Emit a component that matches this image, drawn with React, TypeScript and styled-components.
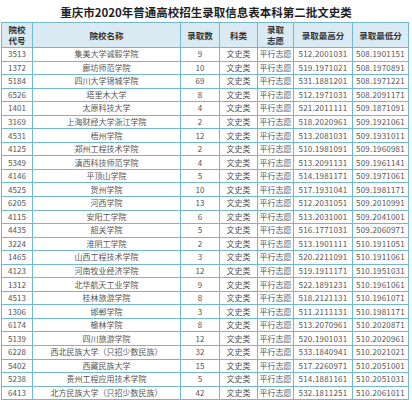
import React from "react";
import styled, { createGlobalStyle } from "styled-components";

const Global = createGlobalStyle`
  html, body { margin: 0; padding: 0; background: #ffffff; }
  body { font-family: "Noto Sans CJK SC", "Noto Sans", sans-serif; }
`;

const Page = styled.div`
  width: 412px;
  height: 400px;
  overflow: hidden;
  background: #ffffff;
`;

const Title = styled.h1`
  margin: 0;
  height: 22px;
  box-sizing: border-box;
  padding-bottom: 3px;
  display: flex;
  align-items: flex-end;
  justify-content: center;
  font-family: "Noto Sans CJK SC", sans-serif;
  font-size: 11.5px;
  line-height: 13px;
  font-weight: 700;
  color: #1f1f1f;
`;

const Grid = styled.div`
  margin-left: 1px;
  width: 408px;
  box-sizing: border-box;
  display: grid;
  grid-template-columns: 30px 147px 38px 37px 35px 58px 55px;
  grid-template-rows: 24px;
  grid-auto-rows: 12.55px;
  gap: 1px;
  padding: 1px;
  background: #72b9d0;
`;

const HeadCell = styled.div`
  background: #d9eaf3;
  display: flex;
  flex-direction: column;
  align-items: center;
  justify-content: center;
  font-size: 8.5px;
  line-height: 11px;
  font-weight: 700;
  color: #333333;
  text-align: center;
`;

const Cell = styled.div<{ $wide?: boolean }>`
  background: #ffffff;
  display: flex;
  align-items: center;
  justify-content: center;
  font-size: 8px;
  line-height: 10px;
  color: #555555;
  white-space: nowrap;
  overflow: hidden;
  letter-spacing: ${(p) => (p.$wide ? "0.2px" : "0")};
`;

type Row = [string, string, string, string, string];

const rows: Row[] = [
  ["3513", "集美大学诚毅学院", "9", "512.2001031", "508.1901151"],
  ["1372", "廊坊师范学院", "10", "519.1971021", "508.1970891"],
  ["5184", "四川大学锦城学院", "69", "531.1881201", "508.1971221"],
  ["6526", "塔里木大学", "8", "512.1971031", "508.2091171"],
  ["1401", "太原科技大学", "4", "521.2011111", "509.1871091"],
  ["3169", "上海财经大学浙江学院", "2", "518.2020961", "509.1921061"],
  ["4531", "梧州学院", "12", "513.2081031", "509.1931011"],
  ["4125", "郑州工程技术学院", "2", "510.1981091", "509.1960981"],
  ["5349", "滇西科技师范学院", "4", "513.2091131", "509.1961141"],
  ["4146", "平顶山学院", "5", "514.1981171", "509.1971061"],
  ["4525", "贺州学院", "10", "517.1931041", "509.1981171"],
  ["6205", "河西学院", "13", "512.2031051", "509.2010991"],
  ["4115", "安阳工学院", "6", "513.2031001", "509.2041001"],
  ["4435", "韶关学院", "5", "516.1771031", "509.2060971"],
  ["3224", "淮阴工学院", "2", "513.1901111", "510.1911051"],
  ["1465", "山西工程技术学院", "3", "520.2211091", "510.1911061"],
  ["4123", "河南牧业经济学院", "12", "519.1911171", "510.1951031"],
  ["1312", "北华航天工业学院", "9", "522.1891231", "510.1961061"],
  ["4513", "桂林旅游学院", "8", "518.2121131", "510.1961071"],
  ["1306", "邯郸学院", "3", "511.2111131", "510.1981171"],
  ["6174", "榆林学院", "8", "513.2070961", "510.2020871"],
  ["5139", "四川旅游学院", "12", "520.1901031", "510.2020961"],
  ["6228", "西北民族大学（只招少数民族）", "32", "533.1840941", "510.2021021"],
  ["5402", "西藏民族大学", "15", "517.2260971", "510.2051001"],
  ["5238", "贵州工程应用技术学院", "5", "514.1881161", "510.2051031"],
  ["6413", "北方民族大学（只招少数民族）", "42", "532.1811251", "510.2061011"],
];

export default function App() {
  return (
    <Page>
      <Global />
      <Title>重庆市2020年普通高校招生录取信息表本科第二批文史类</Title>
      <Grid>
        <HeadCell>
          <span>院校</span>
          <span>代号</span>
        </HeadCell>
        <HeadCell>院校名称</HeadCell>
        <HeadCell>录取数</HeadCell>
        <HeadCell>科类</HeadCell>
        <HeadCell>
          <span>录取</span>
          <span>志愿</span>
        </HeadCell>
        <HeadCell>录取最高分</HeadCell>
        <HeadCell>录取最低分</HeadCell>
        {rows.map(([code, name, count, high, low]) => (
          <React.Fragment key={code}>
            <Cell>{code}</Cell>
            <Cell>{name}</Cell>
            <Cell>{count}</Cell>
            <Cell>文史类</Cell>
            <Cell>平行志愿</Cell>
            <Cell $wide>{high}</Cell>
            <Cell $wide>{low}</Cell>
          </React.Fragment>
        ))}
      </Grid>
    </Page>
  );
}
